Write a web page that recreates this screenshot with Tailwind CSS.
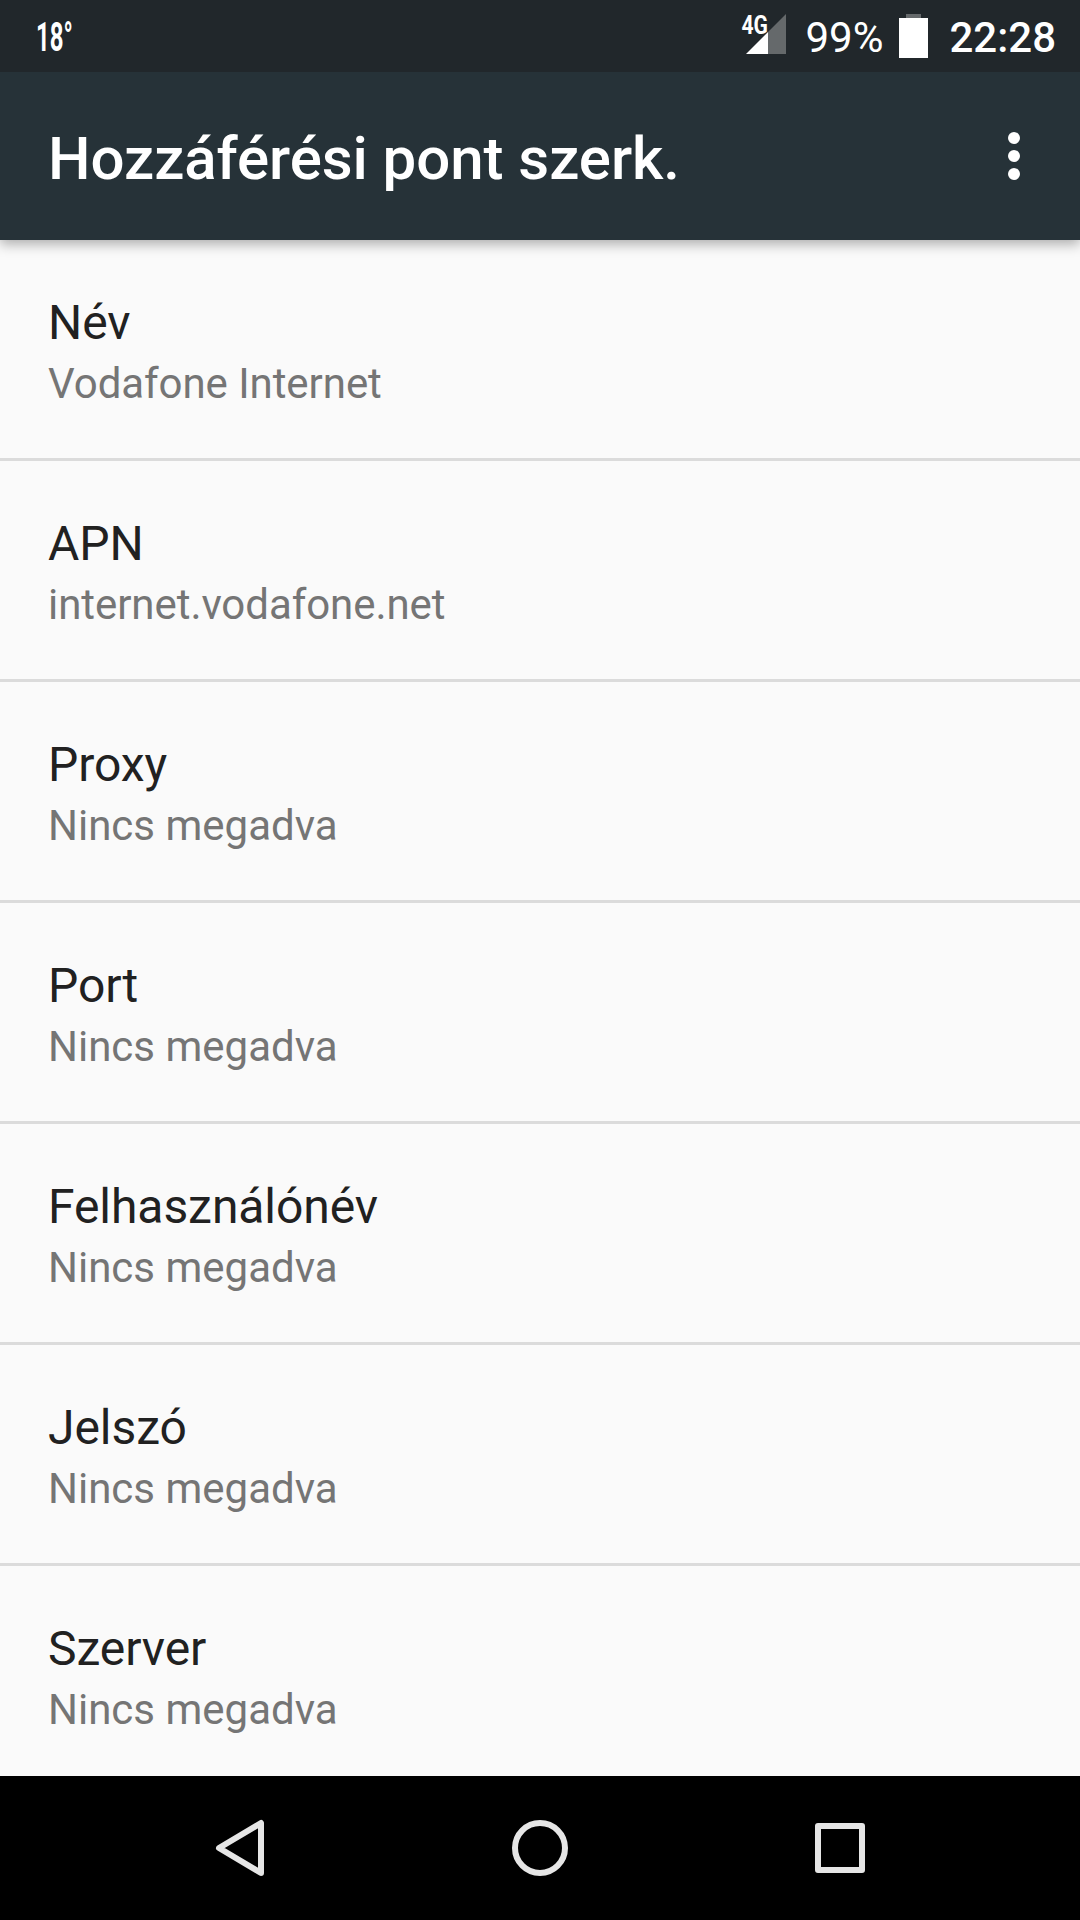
<!DOCTYPE html>
<html lang="hu">
<head>
<meta charset="utf-8">
<title>Hozzáférési pont szerk.</title>
<script src="https://cdn.jsdelivr.net/npm/@tailwindcss/browser@4"></script>
</head>
<body class="w-[1080px] h-[1920px] overflow-hidden flex flex-col bg-[#fafafa] font-[Roboto,sans-serif]">
<header class="h-[72px] bg-[#21272b] text-white flex items-center shrink-0 pl-9 pr-6 relative z-10">
  <div class="w-10 leading-[72px] pt-[3px] text-[40px] font-bold origin-left scale-x-[0.6] whitespace-nowrap overflow-visible">18°</div>
  <div class="ml-auto flex items-center">
    <svg class="w-[50px] h-[72px]" viewBox="740 0 50 72">
      <path d="M768 54V32L786 14V54Z" fill="#65696b"/>
      <path d="M746 54L768 32V54Z" fill="#fff"/>
      <text x="741.5" y="33.5" font-size="26" font-weight="700" fill="#fff" textLength="26.5" lengthAdjust="spacingAndGlyphs">4G</text>
    </svg>
    <span class="text-[42px] leading-[72px] ml-[15px] pt-[3px]">99%</span>
    <svg class="w-[30px] h-[72px] ml-4" viewBox="899 0 30 72"><path d="M906 14h15v4h-15z" fill="#65696b"/><path d="M899 18h29v40h-29z" fill="#fff"/></svg>
    <span class="text-[42px] leading-[72px] font-medium ml-5 pt-[3px]">22:28</span>
  </div>
</header>
<div class="h-[168px] bg-[#263238] shrink-0 flex items-center justify-between pl-12 pr-[58px] text-white relative shadow-[0_4px_12px_rgba(0,0,0,0.32)]">
  <h1 class="text-[60px] leading-none font-medium tracking-[-0.06px] pt-[5px]">Hozzáférési pont szerk.</h1>
  <svg class="w-4 h-[168px]" viewBox="0 0 16 168" fill="#fff"><circle cx="8" cy="66" r="6"/><circle cx="8" cy="84" r="6"/><circle cx="8" cy="102" r="6"/></svg>
</div>
<main class="flex-1 min-h-0 overflow-hidden tracking-[-0.06px]">
  <div class="h-[221px] border-b-3 border-[#dbdbdb] pl-12 pt-[53px]"><div class="text-[48px] leading-[60px] text-[#212121]">Név</div><div class="text-[42px] leading-[62px] text-[#757575]">Vodafone Internet</div></div>
  <div class="h-[221px] border-b-3 border-[#dbdbdb] pl-12 pt-[53px]"><div class="text-[48px] leading-[60px] text-[#212121]">APN</div><div class="text-[42px] leading-[62px] text-[#757575]">internet.vodafone.net</div></div>
  <div class="h-[221px] border-b-3 border-[#dbdbdb] pl-12 pt-[53px]"><div class="text-[48px] leading-[60px] text-[#212121]">Proxy</div><div class="text-[42px] leading-[62px] tracking-normal text-[#757575]">Nincs megadva</div></div>
  <div class="h-[221px] border-b-3 border-[#dbdbdb] pl-12 pt-[53px]"><div class="text-[48px] leading-[60px] text-[#212121]">Port</div><div class="text-[42px] leading-[62px] tracking-normal text-[#757575]">Nincs megadva</div></div>
  <div class="h-[221px] border-b-3 border-[#dbdbdb] pl-12 pt-[53px]"><div class="text-[48px] leading-[60px] text-[#212121]">Felhasználónév</div><div class="text-[42px] leading-[62px] tracking-normal text-[#757575]">Nincs megadva</div></div>
  <div class="h-[221px] border-b-3 border-[#dbdbdb] pl-12 pt-[53px]"><div class="text-[48px] leading-[60px] text-[#212121]">Jelszó</div><div class="text-[42px] leading-[62px] tracking-normal text-[#757575]">Nincs megadva</div></div>
  <div class="h-[221px] pl-12 pt-[53px]"><div class="text-[48px] leading-[60px] text-[#212121]">Szerver</div><div class="text-[42px] leading-[62px] tracking-normal text-[#757575]">Nincs megadva</div></div>
</main>
<nav class="h-36 shrink-0 bg-black flex items-center justify-center gap-[240px]">
  <svg class="w-[60px] h-[60px]" viewBox="0 0 60 60" fill="none" stroke="#e6e6e6" stroke-width="6" stroke-linejoin="round"><path d="M51 5V55L9 30Z"/></svg>
  <svg class="w-[60px] h-[60px]" viewBox="0 0 60 60" fill="none" stroke="#e6e6e6" stroke-width="6"><circle cx="30" cy="30" r="25"/></svg>
  <svg class="w-[60px] h-[60px]" viewBox="0 0 60 60" fill="none" stroke="#e6e6e6" stroke-width="6" stroke-linejoin="round"><path d="M8 8H52V52H8Z"/></svg>
</nav>
</body>
</html>
